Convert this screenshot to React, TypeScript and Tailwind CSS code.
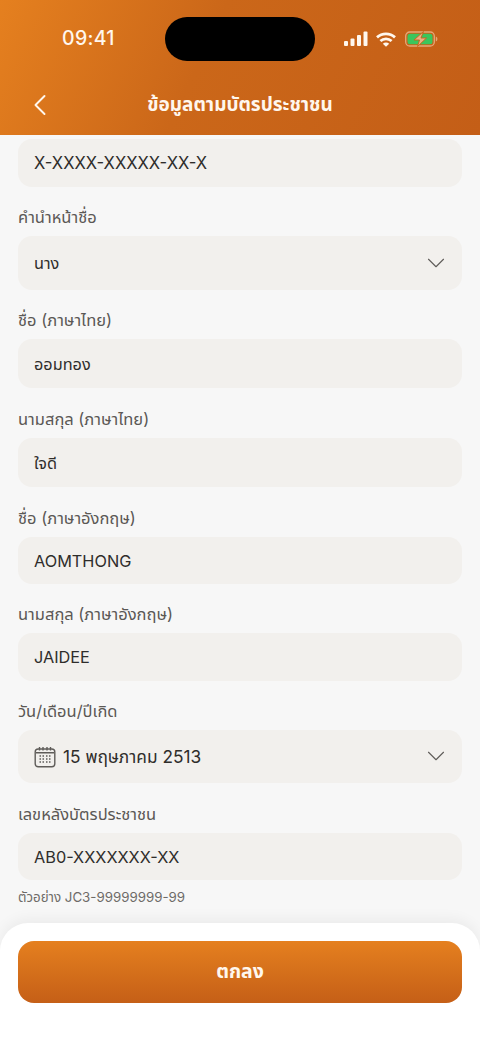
import { ChevronDown, ChevronLeft } from "lucide-react";

function StatusIcons() {
  return (
    <div className="flex items-center gap-[8px]">
      <svg width="24" height="16" viewBox="0 0 24 16" fill="#fff7ee">
        <rect x="0" y="10" width="4" height="5" rx="1" />
        <rect x="6.500" y="7.500" width="4" height="7.500" rx="1" />
        <rect x="13" y="4" width="4" height="11" rx="1" />
        <rect x="19.500" y="0.500" width="4" height="14.500" rx="1" />
      </svg>
      <svg width="20" height="15" viewBox="0 0 20 15" fill="none" stroke="#fff7ee" strokeWidth="2.800">
        <path d="M1 5.400C6 .8 14 .8 19 5.400" />
        <path d="M4.400 9c3.200-2.900 8-2.900 11.200 0" />
        <path d="M10 14.800 6.800 11.700c1.800-1.500 4.600-1.500 6.400 0Z" fill="#fff7ee" stroke="none" />
      </svg>
      <svg width="33" height="16" viewBox="0 0 33 16" className="ml-[1px]">
        <rect x="0.700" y="1" width="28.600" height="14" rx="4" fill="none" stroke="#e4a878" strokeWidth="1.300" />
        <rect x="2.500" y="2.800" width="25" height="10.400" rx="2.500" fill="#3ac65c" />
        <path d="M30.800 5.500c1.200.4 1.600 1.300 1.600 2.500s-.4 2.100-1.600 2.500Z" fill="#e4a878" />
        <path d="M18.500 0.500 9 9h5.500L12.500 15.500 21.500 7H16Z" fill="#e9b183" stroke="#c8621a" strokeWidth="0.900" />
      </svg>
    </div>
  );
}

function Field({
  label,
  value,
  height,
  gap,
  valueSize = "text-[16.300px]",
  children,
}: {
  label: string;
  value: string;
  height: string;
  gap: string;
  valueSize?: string;
  children?: React.ReactNode;
}) {
  return (
    <div className={gap}>
      <p className="mb-[10px] text-[16.500px] leading-[18px] text-[#5b5855]">{label}</p>
      <div className={`${height} flex items-center rounded-[14px] bg-[#f2f0ed] px-4`}>
        <div className={`flex items-center gap-[7px] text-[#2f2d2b] ${valueSize}`}>
          {children}
          <span className="pt-[1px]">{value}</span>
        </div>
      </div>
    </div>
  );
}

function SelectField(props: {
  label: string;
  value: string;
  height: string;
  gap: string;
  valueSize?: string;
  children?: React.ReactNode;
}) {
  return (
    <div className="relative">
      <Field {...props} />
      <ChevronDown
        className="absolute right-[11px] bottom-[12px] text-[#5f5c59]"
        size={30}
        strokeWidth={0.9}
      />
    </div>
  );
}

function CalendarIcon() {
  return (
    <svg width="22" height="22" viewBox="0 0 22 22" fill="none" stroke="#5f5c59" strokeWidth="1.400">
      <rect x="1.200" y="3" width="19.600" height="17.800" rx="3" />
      <path d="M5.500 1v3.500M9 1v3.500M13 1v3.500M16.500 1v3.500M2 6.700h18" />
      <path
        d="M5.500 10h1.500M8.500 10H10M12 10h1.500M15 10h1.500M5.500 13h1.500M8.500 13H10M12 13h1.500M15 13h1.500M5.500 16h1.500M8.500 16H10M12 16h1.500M15 16h1.500"
        strokeWidth="1.500"
      />
    </svg>
  );
}

export default function App() {
  return (
    <main
      className="relative flex h-[1044px] w-[480px] flex-col overflow-hidden bg-[#f7f7f7]"
      style={{ fontFamily: 'Inter, "Noto Sans", "Noto Sans Thai", "DejaVu Sans", sans-serif' }}
    >
      <header className="h-[135px] shrink-0 bg-[linear-gradient(115deg,#e5801f_0%,#cb6719_42%,#c45e17_100%)] text-[#fff7ee]">
        <div className="relative flex h-[78px] items-center justify-between pl-[62px] pr-[42px]">
          <span className="text-[19.500px] font-medium tracking-[0.3px]">09:41</span>
          <div className="absolute left-[165px] top-[17px] h-[44px] w-[150px] rounded-full bg-black" />
          <StatusIcons />
        </div>
        <div className="relative flex h-[57px] items-center justify-center">
          <ChevronLeft className="absolute left-[22px] top-[9px]" size={36} strokeWidth={1.300} />
          <h1 className="mb-[2px] text-[19px] font-bold">ข้อมูลตามบัตรประชาชน</h1>
        </div>
      </header>

      <section className="flex-1 overflow-hidden px-[18px] pt-1">
        <div className="flex h-[48px] items-center rounded-[14px] bg-[#f2f0ed] px-4 text-[16.600px] text-[#2f2d2b]">
          <span className="pt-[1px]">X-XXXX-XXXXX-XX-X</span>
        </div>
        <SelectField label="คำนำหน้าชื่อ" value="นาง" height="h-[54px]" gap="mt-[21px]" />
        <Field label="ชื่อ (ภาษาไทย)" value="ออมทอง" height="h-[49px]" gap="mt-[21px]" />
        <Field label="นามสกุล (ภาษาไทย)" value="ใจดี" height="h-[49px]" gap="mt-[22px]" />
        <Field label="ชื่อ (ภาษาอังกฤษ)" value="AOMTHONG" height="h-[47px]" gap="mt-[22px]" />
        <Field label="นามสกุล (ภาษาอังกฤษ)" value="JAIDEE" height="h-[48px]" gap="mt-[21px]" />
        <SelectField
          label="วัน/เดือน/ปีเกิด"
          value="15 พฤษภาคม 2513"
          height="h-[53px]"
          gap="mt-[21px]"
          valueSize="text-[17.300px]"
        >
          <CalendarIcon />
        </SelectField>
        <Field label="เลขหลังบัตรประชาชน" value="AB0-XXXXXXX-XX" height="h-[47px]" gap="mt-[22px]" />
        <p className="mt-[8px] text-[13.300px] leading-[18px] text-[#6e6b68]">ตัวอย่าง JC3-99999999-99</p>
      </section>

      <footer className="h-[121px] shrink-0 rounded-t-[28px] bg-white px-[18px] pt-[18px] shadow-[0_-4px_14px_rgba(0,0,0,0.05)]">
        <button className="h-[62px] w-full rounded-[16px] bg-gradient-to-b from-[#e5801f] to-[#c55f17] text-[19.500px] font-bold text-[#fff7ee]">
          ตกลง
        </button>
      </footer>
    </main>
  );
}
